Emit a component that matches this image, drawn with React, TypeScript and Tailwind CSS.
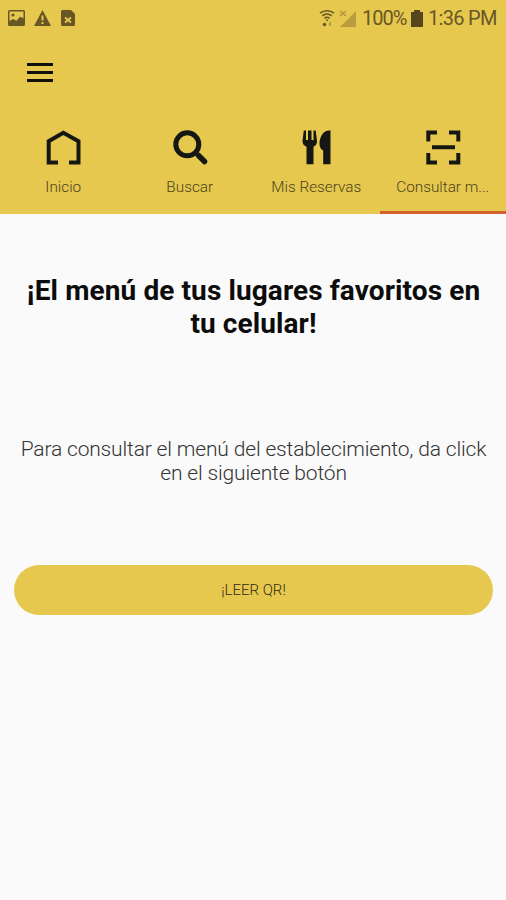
import type { ReactNode } from 'react';

function StatusBar() {
  return (
    <div className="h-9 pl-2 pr-2 flex items-center justify-between text-[#685725]">
      <div className="flex items-center gap-[9px]">
        <svg className="w-[17px] h-4" viewBox="0 0 17 16" fill="currentColor">
          <path fillRule="evenodd" d="M1.500 0h14A1.500 1.500 0 0 1 17 1.500v13A1.500 1.500 0 0 1 15.500 16h-14A1.500 1.500 0 0 1 0 14.500v-13A1.500 1.500 0 0 1 1.500 0ZM1.500 1.500v9.500l3.500-2 3.500 1.800 3.500-4 3.500 1.500V1.500Z" />
          <circle cx="5" cy="5" r="1.600" />
        </svg>
        <svg className="w-[17px] h-4" viewBox="0 0 17 16" fill="currentColor">
          <path fillRule="evenodd" d="M8.500 0 17 16H0ZM7.500 5.500v5h2v-5ZM7.500 12v2h2v-2Z" />
        </svg>
        <svg className="w-[14px] h-4 ml-px" viewBox="0 0 14 16" fill="currentColor">
          <path d="M1.500 0H10l4 4v10.500a1.500 1.500 0 0 1-1.500 1.500h-11A1.500 1.500 0 0 1 0 14.500v-13A1.500 1.500 0 0 1 1.500 0Z" />
          <path d="m4 7.500 6 5m0-5-6 5" stroke="#e6c84f" strokeWidth="1.800" />
        </svg>
      </div>
      <div className="flex items-center">
        <svg className="w-[16px] h-[17px]" viewBox="0 0 16 17" fill="none" stroke="currentColor" strokeWidth="1.600">
          <path d="M1 3.200c4-3.200 10-3.200 14 0M3.300 5.800c2.700-2.200 6.700-2.200 9.400 0M5.500 8.300c1.500-1.200 3.500-1.200 5 0" />
          <path d="m6.500 9.500 1.500 2 1.500-2Z" fill="currentColor" stroke="none" />
          <circle cx="5.500" cy="14.500" r="1.700" fill="currentColor" stroke="none" />
          <path d="M11 12v4" opacity=".5" />
        </svg>
        <svg className="w-[18px] h-[17px] ml-1" viewBox="0 0 18 17">
          <path d="M17 1v16H1Z" fill="#b99c3c" />
          <path d="m1 1 6 5m0-5-6 5" stroke="#b09238" strokeWidth="1.400" />
        </svg>
        <span className="ml-[5px] w-[45px] text-xl leading-none tracking-[-1px] whitespace-nowrap">100%</span>
        <svg className="w-[12px] h-[17px] ml-[4px]" viewBox="0 0 12 17" fill="#55461d">
          <path d="M3 0h6v2h3v15H0V2h3Z" />
        </svg>
        <span className="ml-[5px] w-[70px] text-xl leading-none tracking-[-0.7px] whitespace-nowrap">1:36 PM</span>
      </div>
    </div>
  );
}

function Tab({ label, icon, active }: { label: string; icon: ReactNode; active?: boolean }) {
  return (
    <button className={`flex-1 min-w-0 h-[101px] pt-[14px] flex flex-col items-center border-b-[3px] ${active ? 'border-[#d3602d]' : 'border-transparent'}`}>
      <svg className="w-10 h-10 shrink-0 text-[#151812]" viewBox="0 0 40 40" fill="none" stroke="currentColor" strokeWidth="4">
        {icon}
      </svg>
      <span className="mt-[10px] whitespace-nowrap text-[15.3px] leading-5 font-light text-[#4d431c]">{label}</span>
    </button>
  );
}

export default function App() {
  const tabs = [
    { label: 'Inicio', icon: <path d="M15 35.500H5.700V14.200L20.300 5.700l15.200 8.500v21.300H26" /> },
    {
      label: 'Buscar',
      icon: (
        <>
          <circle cx="17.300" cy="17.300" r="11.500" strokeWidth="5" />
          <path d="m25 25 3 3" strokeWidth="4" />
          <path d="m28.500 28.500 6 6" strokeWidth="5.500" strokeLinecap="round" />
        </>
      ),
    },
    {
      label: 'Mis Reservas',
      icon: (
        <g fill="currentColor" stroke="none">
          <path d="M7.800 3.500h2.200v9.500h2V3.500h3.500V13h2V3.500h2.200L21 14c0 3.200-1.200 4.700-3.500 5.700v17.600h-7V19.700c-2.500-1-4-2.500-4-5.700Z" />
          <path d="M33 3.500h1.500v33.800h-7.300V23.500c-2.600-1.200-3.700-3.700-3.700-7.100 0-6.500 4-12.900 9.500-12.900Z" />
        </g>
      ),
    },
    { label: 'Consultar m...', icon: <path d="M5.300 14.500V5.500H14M26 5.500h9.300v9M5.300 26v9.500H14M26 35.500h9.300V26M9 20.300h23" /> },
  ];

  return (
    <div className="w-full h-screen bg-[#fafafa] font-[Roboto,sans-serif] overflow-hidden">
      <header className="bg-[#e6c84f]">
        <StatusBar />
        <div className="h-[77px] pl-[27px] pt-[27px]">
          <button className="flex flex-col gap-[5px]" aria-label="Menú">
            <span className="w-[26px] h-[3px] bg-[#100f08]" />
            <span className="w-[26px] h-[3px] bg-[#100f08]" />
            <span className="w-[26px] h-[3px] bg-[#100f08]" />
          </button>
        </div>
        <nav className="flex">
          {tabs.map((tab, i) => (
            <Tab key={tab.label} label={tab.label} icon={tab.icon} active={i === 3} />
          ))}
        </nav>
      </header>

      <main className="pl-[14px] pr-[13px] pt-[60px] flex flex-col text-center">
        <h1 className="text-[28px] leading-[33px] tracking-[0.1px] font-bold text-[#0c0c0c]">
          ¡El menú de tus lugares favoritos en<br />tu celular!
        </h1>
        <p className="mt-[97px] text-[21px] leading-6 tracking-[-0.16px] font-light text-[#333]">
          Para consultar el menú del establecimiento, da click<br />en el siguiente botón
        </p>
        <button className="mt-20 h-[50px] rounded-full bg-[#e6c84f] text-[15px] font-light text-[#332b12]">¡LEER QR!</button>
      </main>
    </div>
  );
}
